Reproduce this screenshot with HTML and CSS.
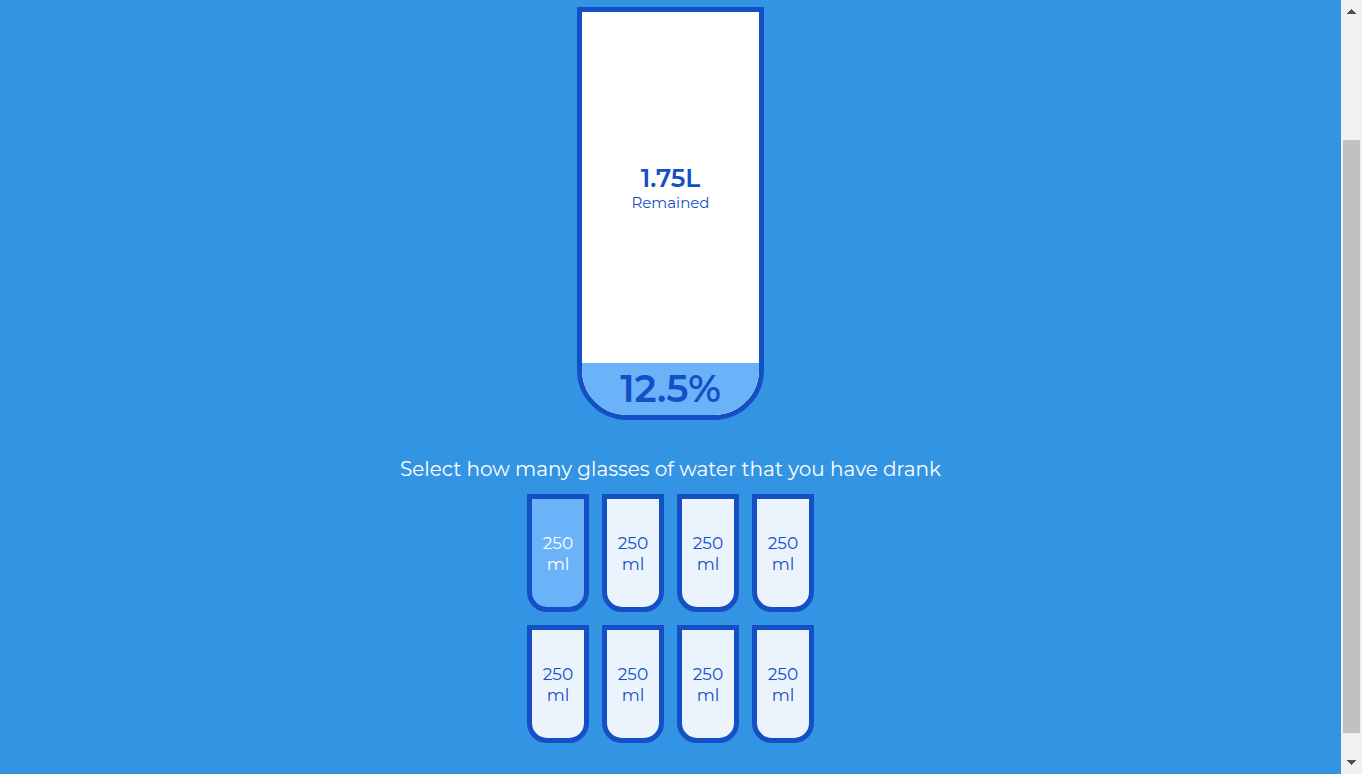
FILE: index.html
```
<!DOCTYPE html>
<html lang="en">
<head>
<meta charset="utf-8">
<meta name="viewport" content="width=device-width, initial-scale=1">
<title>Drink Water</title>
<link rel="stylesheet" href="styles.css">
</head>
<body>
<main class="tracker">
  <section class="cup" aria-label="Daily goal">
    <div class="remained">
      <span class="liters">1.75L</span>
      <small class="caption">Remained</small>
    </div>
    <div class="percentage">12.5%</div>
  </section>
  <p class="prompt">Select how many glasses of water that you have drank</p>
  <div class="glasses">
    <button type="button" class="glass full">250<br>ml</button>
    <button type="button" class="glass">250<br>ml</button>
    <button type="button" class="glass">250<br>ml</button>
    <button type="button" class="glass">250<br>ml</button>
    <button type="button" class="glass">250<br>ml</button>
    <button type="button" class="glass">250<br>ml</button>
    <button type="button" class="glass">250<br>ml</button>
    <button type="button" class="glass">250<br>ml</button>
  </div>
</main>
<aside class="scrollbar" aria-label="Page scroll">
  <button type="button" class="arrow" aria-label="Scroll up"><svg width="9" height="5" viewBox="0 0 9 5" shape-rendering="crispEdges"><path d="M4 0h1v1h1v1h1v1h1v1h1v1H0V4h1V3h1V2h1V1h1z"/></svg></button>
  <div class="track"><div class="thumb"></div></div>
  <button type="button" class="arrow down" aria-label="Scroll down"><svg width="9" height="5" viewBox="0 0 9 5" shape-rendering="crispEdges"><path d="M0 0h9v1H8v1H7v1H6v1H5v1H4V4H3V3H2V2H1V1H0z"/></svg></button>
</aside>
</body>
</html>
```
FILE: styles.css
```
:root {
  --border: #144fc6;
  --fill: #6ab3f8;
}

* {
  box-sizing: border-box;
}

body {
  display: flex;
  min-height: 100vh;
  margin: 0;
  background: #3494e4;
  color: #fff;
  font-family: Montserrat, Inter, sans-serif;
}

.tracker {
  display: flex;
  flex: 1;
  flex-direction: column;
  align-items: center;
  padding: 7px 0 30px;
}

.cup {
  display: flex;
  flex-direction: column;
  width: 187px;
  height: 413px;
  overflow: hidden;
  border: 5px solid var(--border);
  border-radius: 0 0 50px 50px;
  background: #fff;
  color: var(--border);
  text-align: center;
}

.remained {
  display: flex;
  flex: 1;
  flex-direction: column;
  align-items: center;
  justify-content: center;
}

.liters {
  font-size: 25px;
  font-weight: 600;
  line-height: 30px;
}

.caption {
  font-size: 15px;
  line-height: 20px;
}

.percentage {
  height: 52px;
  background: var(--fill);
  font-size: 38px;
  font-weight: 600;
  line-height: 52px;
}

.prompt {
  margin: 36px 0 12px;
  font-size: 20px;
  line-height: 26px;
}

.glasses {
  display: grid;
  grid-template-columns: repeat(4, 62px);
  gap: 13px;
}

.glass {
  height: 118px;
  padding: 2px 0 0;
  border: 5px solid var(--border);
  border-radius: 0 0 20px 20px;
  background: #ebf3fd;
  color: var(--border);
  font: inherit;
  font-size: 17px;
  line-height: 21px;
  cursor: pointer;
}

.glass.full {
  background: var(--fill);
  color: #fff;
}

.scrollbar {
  display: flex;
  flex-direction: column;
  width: 21px;
  background: #f1f1f1;
}

.arrow {
  display: flex;
  align-items: center;
  justify-content: center;
  height: 22px;
  padding: 0;
  border: 0;
  background: none;
  fill: #505050;
}

.arrow.down {
  height: 24px;
}

.track {
  display: flex;
  flex: 1;
  flex-direction: column;
  padding: 118px 2px 17px;
}

.thumb {
  flex: 1;
  background: #c1c1c1;
}
```
